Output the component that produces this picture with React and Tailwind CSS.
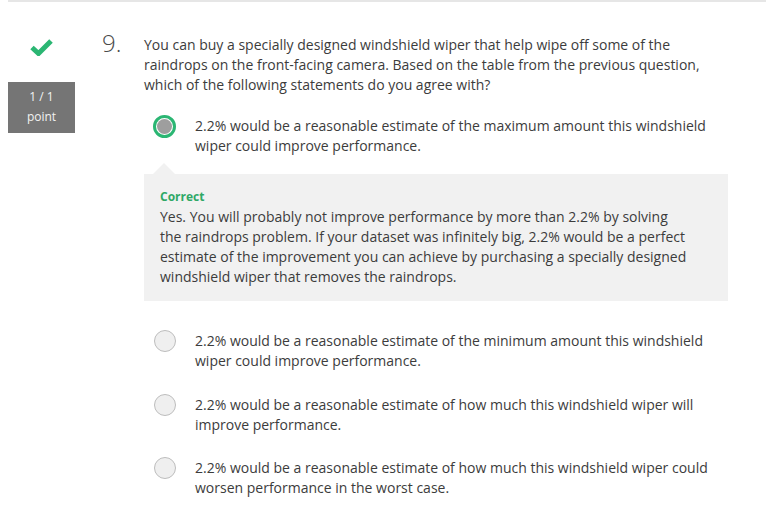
import React from "react";

function Radio({ selected }) {
  if (selected) {
    return (
      <div className="w-[23px] h-[23px] rounded-full border-[3px] border-[#2bb673] bg-white flex items-center justify-center shrink-0 -mt-px">
        <div className="w-[15px] h-[15px] rounded-full bg-[#9e9e9e]" />
      </div>
    );
  }
  return (
    <div className="w-[22px] h-[22px] rounded-full border border-[#bdbdbd] bg-[#efefef] shrink-0 -mt-px ml-px" />
  );
}

function Option({ selected, children, className = "" }) {
  return (
    <div className={"flex items-start " + className}>
      <div className="ml-[9px] w-[23px] flex">
        <Radio selected={selected} />
      </div>
      <div className="ml-[19px] flex-1 text-[14px] leading-5">{children}</div>
    </div>
  );
}

export default function App() {
  return (
    <div className="w-[769px] h-[514px] bg-white overflow-hidden font-['Open_Sans',sans-serif] text-[#3c3c3c]">
      <div className="ml-2 mr-[3px] h-[2px] bg-[#e6e6e6]" />
      <div className="flex pl-2">
        <div className="w-[67px] flex flex-col items-center pt-[37px] shrink-0">
          <svg width="23" height="17" viewBox="0 0 23 17">
            <path d="M2 8.5 L8.5 14.5 L21 2" fill="none" stroke="#2bb673" strokeWidth="5" strokeLinejoin="miter" />
          </svg>
          <div className="mt-[26px] w-[67px] h-[51px] bg-[#757575] text-[#f2f2f2] text-[12px] leading-5 pt-[5px] text-center">
            1 / 1
            <br />
            point
          </div>
        </div>
        <div className="ml-[27px] w-[42px] pt-[25px] text-[24px] leading-8 font-light text-[#4a4a4a] shrink-0">
          9.
        </div>
        <div className="w-[584px] pt-[33px] shrink-0">
          <p className="text-[14px] leading-5">
            You can buy a specially designed windshield wiper that help wipe off some of the raindrops on the
            front-facing camera. Based on the table from the previous question, which of the following statements do
            you agree with?
          </p>
          <Option selected className="mt-[21px]">
            2.2% would be a reasonable estimate of the maximum amount this windshield wiper could improve performance.
          </Option>
          <div className="relative mt-[18px] bg-[#f1f1f1] pl-4 pt-[15px] pb-[14px]">
            <div className="absolute -top-[11px] left-[9px] w-0 h-0 border-l-[11px] border-r-[11px] border-b-[11px] border-l-transparent border-r-transparent border-b-[#f1f1f1]" />
            <div className="text-[12px] leading-4 font-bold text-[#2ea866]">Correct</div>
            <div className="mt-[2px] w-[531px] text-[14px] leading-5">
              Yes. You will probably not improve performance by more than 2.2% by solving the raindrops problem. If
              your dataset was infinitely big, 2.2% would be a perfect estimate of the improvement you can achieve by
              purchasing a specially designed windshield wiper that removes the raindrops.
            </div>
          </div>
          <Option className="mt-[30px]">
            2.2% would be a reasonable estimate of the minimum amount this windshield wiper could improve performance.
          </Option>
          <Option className="mt-[24px]">
            2.2% would be a reasonable estimate of how much this windshield wiper will improve performance.
          </Option>
          <Option className="mt-[23px]">
            2.2% would be a reasonable estimate of how much this windshield wiper could worsen performance in the worst
            case.
          </Option>
        </div>
      </div>
    </div>
  );
}
